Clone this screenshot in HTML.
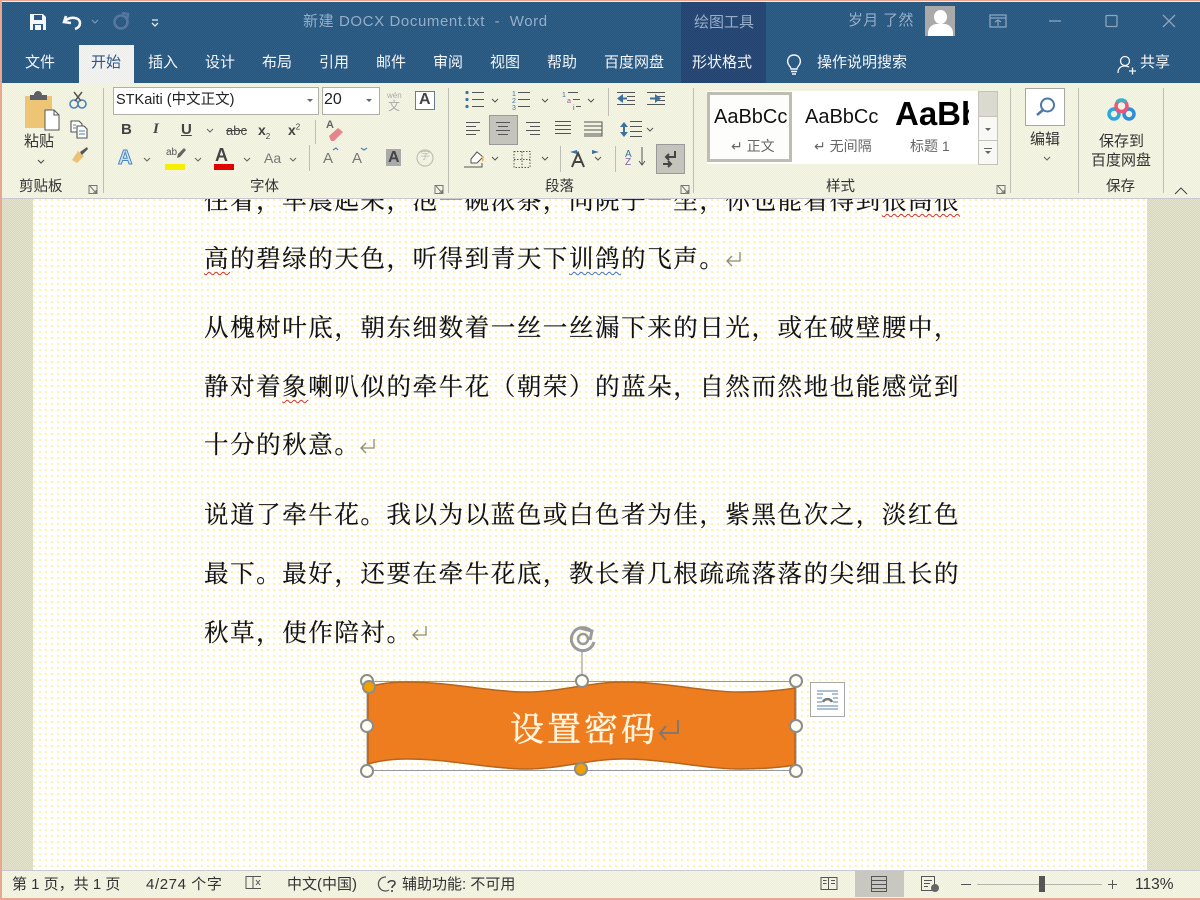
<!DOCTYPE html>
<html lang="zh"><head><meta charset="utf-8"><title>新建 DOCX Document.txt - Word</title>
<style>
html,body{margin:0;padding:0;width:1200px;height:900px;overflow:hidden;background:#e9a78f}
body{position:relative;font-family:"Liberation Sans","Noto Sans CJK SC",sans-serif;color:#333}
.t{position:absolute;white-space:nowrap;line-height:1}
.b{position:absolute}
.tab{font-size:15px;color:#f4f6f8;top:55px}
.lab{font-size:14.5px;color:#333;top:180px}
.doc{position:absolute;left:204px;font-family:"Liberation Serif","Noto Serif CJK SC",serif;font-size:24.5px;letter-spacing:1.57px;color:#111;-webkit-text-stroke:.2px #111;white-space:nowrap;line-height:30px;height:30px}
.st{font-size:15px;color:#333;top:877px}
svg{position:absolute;overflow:visible}
.sep{position:absolute;width:1px;background:#bdbdb4}
.rib{background:repeating-conic-gradient(#f5f5e4 0 25%,#ededec 0 50%) 0 0/2px 2px}
.blue{background:repeating-conic-gradient(#27528c 0 25%,#305f88 0 50%) 0 0/2px 2px}
.dark{background:repeating-conic-gradient(#234470 0 25%,#2a4c6c 0 50%) 0 0/2px 2px}
.side{background:repeating-conic-gradient(#e4e4cc 0 25%,#d4d4d8 0 50%) 0 0/2px 2px}
.page{background:radial-gradient(circle at 1px 1px,#fff0a0 .9px,transparent 1.2px) 0 0/6px 6px #fff}
u.r{text-decoration:underline wavy #d0312d 1px;text-underline-offset:4px;-webkit-text-stroke:.2px #111}
u.bl{text-decoration:underline wavy #4472c4 1px;text-underline-offset:4px}
</style></head><body>

<!-- frame -->
<div class="b rib" style="left:2px;top:1px;width:1198px;height:897px"></div>
<!-- title bar -->
<div class="b blue" style="left:2px;top:2px;width:1198px;height:81px"></div>
<div class="b dark" style="left:681px;top:2px;width:85px;height:81px"></div>

<!-- QAT -->
<svg style="left:0;top:0" width="200" height="45">
<path d="M30 14h13l3 3v13H30z" fill="#f4f6f8"/><rect x="34" y="15" width="8" height="5" fill="#2c5789"/><rect x="33" y="24" width="10" height="6" fill="#2c5789"/><rect x="35" y="25" width="6" height="5" fill="#f4f6f8"/>
<path d="M66 16l-2 6 7 1M65 21c5-5 15-4 15 2 0 3-2 5-5 6" fill="none" stroke="#f4f6f8" stroke-width="2.600"/>
<path d="M92 20l3 3 3-3" fill="none" stroke="#7d98b8" stroke-width="1.200"/>
<circle cx="121" cy="22" r="6.500" fill="none" stroke="#56789f" stroke-width="2.600"/><path d="M122 13l6 1-1 6" fill="none" stroke="#56789f" stroke-width="2.400"/>
<path d="M152 20h6M152 23l3 3 3-3" fill="none" stroke="#e8edf2" stroke-width="1.300"/>
</svg>

<span class="t" style="left:303px;top:14px;font-size:15px;letter-spacing:.6px;color:#97aec8">新建 DOCX Document.txt &nbsp;-&nbsp; Word</span>
<span class="t" style="left:694px;top:15px;font-size:15px;color:#97aec8">绘图工具</span>
<span class="t" style="left:848px;top:13px;font-size:15px;color:#97aec8;letter-spacing:.3px">岁月 了然</span>
<div class="b" style="left:925px;top:6px;width:30px;height:30px;background:#a9a9a9;overflow:hidden">
<div class="b" style="left:9px;top:4px;width:13px;height:14px;background:#fff;border-radius:50%"></div>
<div class="b" style="left:3px;top:18px;width:25px;height:18px;background:#fff;border-radius:9px 9px 0 0"></div></div>
<svg style="left:980px;top:5px" width="210" height="35">
<rect x="10" y="10" width="16" height="12" fill="none" stroke="#8ca4c0" stroke-width="1.300"/><path d="M10 13h16M18 21v-6M15 17l3-2 3 2" fill="none" stroke="#8ca4c0" stroke-width="1.200"/>
<path d="M69 16h12" stroke="#8ca4c0" stroke-width="1.300"/>
<rect x="126" y="10.500" width="11" height="11" rx="1" fill="none" stroke="#8ca4c0" stroke-width="1.300"/>
<path d="M183 10l12 12M195 10l-12 12" stroke="#8ca4c0" stroke-width="1.300"/>
</svg>

<!-- tabs -->
<div class="b rib" style="left:79px;top:45px;width:55px;height:39px"></div>
<span class="t tab" style="left:25px">文件</span>
<span class="t tab" style="left:91px;color:#2c5789">开始</span>
<span class="t tab" style="left:148px">插入</span>
<span class="t tab" style="left:205px">设计</span>
<span class="t tab" style="left:262px">布局</span>
<span class="t tab" style="left:319px">引用</span>
<span class="t tab" style="left:376px">邮件</span>
<span class="t tab" style="left:433px">审阅</span>
<span class="t tab" style="left:490px">视图</span>
<span class="t tab" style="left:547px">帮助</span>
<span class="t tab" style="left:604px">百度网盘</span>
<span class="t tab" style="left:692px">形状格式</span>
<svg style="left:784px;top:52px" width="20" height="24"><path d="M5.500 14c-4-5-1-11 4.500-11s8.500 6 4.500 11c-1 1-1.500 2-1.500 3H7c0-1-.5-2-1.500-3z" fill="none" stroke="#f4f6f8" stroke-width="1.400"/><path d="M7 19.500h6M8 22h4" stroke="#f4f6f8" stroke-width="1.400"/></svg>
<span class="t tab" style="left:817px">操作说明搜索</span>
<svg style="left:1116px;top:54px" width="22" height="22"><circle cx="9" cy="7" r="4.500" fill="none" stroke="#f4f6f8" stroke-width="1.300"/><path d="M2 19c0-5 3-7 7-7 2 0 3 .5 4 1M13 17h7M16.500 13.500v7" fill="none" stroke="#f4f6f8" stroke-width="1.300"/></svg>
<span class="t tab" style="left:1140px">共享</span>

<!-- ribbon separators -->
<div class="sep" style="left:103px;top:88px;height:105px"></div>
<div class="sep" style="left:448px;top:88px;height:105px"></div>
<div class="sep" style="left:693px;top:88px;height:105px"></div>
<div class="sep" style="left:1010px;top:88px;height:105px"></div>
<div class="sep" style="left:1078px;top:88px;height:105px"></div>
<div class="sep" style="left:1163px;top:88px;height:105px"></div>
<div class="sep" style="left:315px;top:120px;height:24px"></div>
<div class="sep" style="left:309px;top:145px;height:26px"></div>
<div class="sep" style="left:608px;top:88px;height:28px"></div>
<div class="sep" style="left:560px;top:146px;height:26px"></div>
<div class="sep" style="left:615px;top:146px;height:26px"></div>

<!-- clipboard -->
<svg style="left:0;top:85px" width="110" height="90">
<rect x="25" y="11" width="27" height="32" fill="#eec574"/>
<path d="M30 15v-5h4a4 4 0 0 1 8 0h5v5z" fill="#5e5e66"/>
<path d="M45 25h9l5 5v15H45z" fill="#fff" stroke="#555" stroke-width="1"/><path d="M54 25v5h5" fill="none" stroke="#555"/>
<path d="M38 75l3 3 3-3" fill="none" stroke="#555" stroke-width="1.200"/>
<circle cx="74" cy="19" r="4" fill="none" stroke="#4d82b8" stroke-width="1.600"/><circle cx="82" cy="19" r="4" fill="none" stroke="#4d82b8" stroke-width="1.600"/>
<path d="M75 16l7-9M81 16l-7-9" stroke="#555" stroke-width="1.500"/>
<path d="M71 36h8l3 3v8H71z" fill="#fdfdfb" stroke="#555" stroke-width="1.100"/><path d="M77 41h7l3 3v9H77z" fill="#fdfdfb" stroke="#555" stroke-width="1.100"/><path d="M73 40h3M73 43h3M79 46h6M79 49h6" stroke="#4d82b8"/>
<path d="M72 75l6-9 6 5-7 7z" fill="#ebc174"/><path d="M80 67l7-5 1 2-6 6z" fill="#555"/>
</svg>
<span class="t" style="left:24px;top:134px;font-size:15px">粘贴</span>

<!-- font boxes -->
<div class="b" style="left:113px;top:87px;width:204px;height:26px;background:#fff;border:1px solid #b0b0a8"></div>
<span class="t" style="left:116px;top:93px;font-size:14.500px;color:#222">STKaiti (中文正文)</span>
<div class="b" style="left:322px;top:87px;width:56px;height:26px;background:#fff;border:1px solid #b0b0a8"></div>
<span class="t" style="left:324px;top:92px;font-size:16px;color:#222">20</span>
<svg style="left:0;top:85px" width="450" height="90">
<path d="M307 14h6l-3 3zM366 14h6l-3 3z" fill="#666"/>
<rect x="415.500" y="6.500" width="19" height="18" fill="#fff" stroke="#6a7a90"/>
</svg>
<span class="t" style="left:387px;top:92px;font-size:8px;color:#aaa">wén</span>
<span class="t" style="left:388px;top:100px;font-size:12px;color:#aaa">文</span>
<span class="t" style="left:419px;top:92px;font-size:16px;font-weight:bold;color:#444">A</span>

<!-- font row 2 -->
<span class="t" style="left:121px;top:122px;font-size:15px;font-weight:bold;color:#444">B</span>
<span class="t" style="left:153px;top:122px;font-size:15px;font-weight:bold;font-style:italic;color:#444;font-family:'Liberation Serif',serif">I</span>
<span class="t" style="left:181px;top:122px;font-size:15px;font-weight:bold;color:#444;text-decoration:underline">U</span>
<span class="t" style="left:226px;top:124px;font-size:13px;color:#444;text-decoration:line-through">abc</span>
<span class="t" style="left:258px;top:123px;font-size:14px;font-weight:bold;color:#444">x<sub style="font-size:8px;font-weight:normal">2</sub></span>
<span class="t" style="left:288px;top:123px;font-size:14px;font-weight:bold;color:#444">x<sup style="font-size:8px;font-weight:normal">2</sup></span>
<span class="t" style="left:326px;top:120px;font-size:11px;font-weight:bold;color:#666">A</span>
<svg style="left:0;top:115px" width="450" height="60">
<path d="M207 14l3 3 3-3M144 43l3 3 3-3M195 43l3 3 3-3M244 43l3 3 3-3M290 43l3 3 3-3" fill="none" stroke="#666" stroke-width="1.100"/>
<path d="M329 21l9-8 5 4-9 9h-3z" fill="#e8848c"/>
<rect x="165" y="49" width="20" height="6" fill="#f7ee00"/><rect x="214" y="49" width="20" height="6" fill="#e00000"/>
<path d="M178 39l6-6 2 2-6 7-3 1z" fill="#666"/>
<rect x="386" y="34" width="15" height="17" fill="#aaa"/>
<circle cx="425" cy="43" r="8" fill="none" stroke="#c0c0b4" stroke-width="1.200"/>
</svg>
<span class="t" style="left:118px;top:148px;font-size:20px;font-weight:bold;color:#cfe2f2;-webkit-text-stroke:1px #4a88c0">A</span>
<span class="t" style="left:166px;top:148px;font-size:10px;color:#555">ab</span>
<span class="t" style="left:215px;top:146px;font-size:18px;font-weight:bold;color:#444">A</span>
<span class="t" style="left:264px;top:151px;font-size:14px;color:#777">Aa</span>
<span class="t" style="left:323px;top:151px;font-size:15px;color:#777">A</span>
<span class="t" style="left:352px;top:151px;font-size:15px;color:#777">A</span>
<span class="t" style="left:388px;top:150px;font-size:16px;font-weight:bold;color:#444">A</span>
<span class="t" style="left:420px;top:152px;font-size:10px;color:#bbb">字</span>
<svg style="left:0;top:145px" width="450" height="20"><path d="M333 5l3-2 2 2M361 3l3 2 3-2" fill="none" stroke="#4d82b8" stroke-width="1.200"/></svg>

<!-- paragraph -->
<div class="b" style="left:489px;top:115px;width:27px;height:28px;background:#c4c4bc;border:1px solid #999"></div>
<div class="b" style="left:656px;top:144px;width:27px;height:28px;background:#c4c4bc;border:1px solid #999"></div>
<svg style="left:440px;top:85px" width="260" height="90">
<g stroke="#555" stroke-width="1" fill="none">
<path d="M32 7.500h12M32 14.500h12M32 21.500h12M78 7.500h12M78 14.500h12M78 21.500h12M128 7.500h10M133 14.500h7M136 21.500h5"/>
<path d="M52 14l3 3 3-3M102 14l3 3 3-3M148 14l3 3 3-3M207 43l3 3 3-3M52 72l3 3 3-3M102 72l3 3 3-3M155 72l3 3 3-3" />
<path d="M26 37.500h14M26 41.500h10M26 45.500h14M26 49.500h10"/>
<path d="M56 37.500h14M58 41.500h10M56 45.500h14M58 49.500h10"/>
<path d="M86 37.500h14M90 41.500h10M86 45.500h14M90 49.500h10"/>
<path d="M115 36.500h16M115 40.500h16M115 44.500h16M115 48.500h16"/>
<path d="M144 37h18v14h-18M144 41h18M144 45h18M144 49h18"/>
<path d="M190 36.500h12M190 41.500h12M190 46.500h12M190 51.500h12"/>
<path d="M177 7.500h18M187 11.500h8M187 15.500h8M177 19.500h18M207 7.500h18M216 11.500h9M216 15.500h9M207 19.500h18"/>
<path d="M74 66.500h16v16H74zM82 66.500v16M74 74.500h16" stroke-dasharray="1.500 1.500"/>
<path d="M24 82h18v-4" />
</g>
<g fill="#3f6f9f">
<circle cx="27" cy="7.500" r="1.600"/><circle cx="27" cy="14.500" r="1.600"/><circle cx="27" cy="21.500" r="1.600"/>
<path d="M177 13.500l6-4.500v9zM215 9l6 4.500-6 4.500zM183 12.500h4v2h-4zM210 12.500h5v2h-5zM184 37l-4 5h8zM184 52l-4-5h8z"/>
<rect x="183" y="41" width="2" height="7"/>
<path d="M130 67l7-2v4zM159 67l-7-2v4z"/>
</g>
<path d="M31 74l6-7 6 5-6 6h-6z" fill="#fff" stroke="#555"/><path d="M42 70l2 5-2 2z" fill="#e8b860"/>
<path d="M132 82l6-14 6 14M134 77h8" fill="none" stroke="#444" stroke-width="2"/>
<path d="M202 62v18M199 76l3 4 3-4" fill="none" stroke="#555"/>
<path d="M235 66v6h-9M229 69l-3 3 3 3" fill="none" stroke="#444" stroke-width="2"/>
<path d="M223 79h8M228 76l3 3-3 3" fill="none" stroke="#444" stroke-width="2"/>
</svg>
<span class="t" style="left:512px;top:91px;font-size:7px;color:#3f6f9f;line-height:7px;white-space:pre-line">1
2
3</span>
<span class="t" style="left:562px;top:92px;font-size:7px;color:#3f6f9f;line-height:7px">1</span>
<span class="t" style="left:567px;top:98px;font-size:7px;color:#8a5a9a;line-height:7px">a</span>
<span class="t" style="left:573px;top:105px;font-size:7px;color:#555;line-height:7px">i</span>
<span class="t" style="left:625px;top:150px;font-size:10px;color:#3f6f9f">A</span>
<span class="t" style="left:625px;top:158px;font-size:10px;color:#8a5a9a">Z</span>

<!-- styles -->
<div class="b" style="left:707px;top:91px;width:271px;height:73px;background:#fff"></div>
<div class="b" style="left:707px;top:92px;width:79px;height:64px;background:#fdfdfb;border:3px solid #bdbdb4"></div>
<span class="t" style="left:714px;top:107px;font-size:20px;color:#111">AaBbCc</span>
<span class="t" style="left:805px;top:107px;font-size:20px;color:#111">AaBbCc</span>
<div class="b" style="left:895px;top:93px;width:74px;height:44px;overflow:hidden"><span class="t" style="left:0;top:4px;font-size:33px;font-weight:bold;color:#000">AaBbC</span></div>
<span class="t" style="left:731px;top:139px;font-size:14px;color:#666">↵ 正文</span>
<span class="t" style="left:814px;top:139px;font-size:14px;color:#666">↵ 无间隔</span>
<span class="t" style="left:910px;top:139px;font-size:14px;color:#666">标题 1</span>
<div class="b" style="left:978px;top:91px;width:18px;height:24px;background:#dadad0;border:1px solid #c4c4bc"></div>
<div class="b" style="left:978px;top:116px;width:18px;height:23px;background:#f8f8f4;border:1px solid #c4c4bc"></div>
<div class="b" style="left:978px;top:140px;width:18px;height:23px;background:#f8f8f4;border:1px solid #c4c4bc"></div>
<svg style="left:978px;top:91px" width="20" height="72"><path d="M7 37h6l-3 3zM7 60h6l-3 3z" fill="#666"/><path d="M6 57.500h8" stroke="#666"/></svg>

<!-- edit -->
<div class="b" style="left:1025px;top:88px;width:38px;height:36px;background:#fff;border:1px solid #a8a8a0"></div>
<svg style="left:1025px;top:88px" width="40" height="38"><circle cx="22.500" cy="17" r="6.500" fill="none" stroke="#4a78a8" stroke-width="2"/><path d="M18 22l-6 5" stroke="#4a78a8" stroke-width="2.500"/></svg>
<span class="t" style="left:1030px;top:132px;font-size:15px">编辑</span>
<svg style="left:1040px;top:153px" width="14" height="10"><path d="M4 4l3 3 3-3" fill="none" stroke="#666" stroke-width="1.100"/></svg>

<!-- baidu -->
<svg style="left:1105px;top:97px" width="32" height="28">
<circle cx="9" cy="17" r="5" fill="none" stroke="#29a8e0" stroke-width="3.500"/>
<circle cx="24" cy="17" r="5" fill="none" stroke="#2c8ed8" stroke-width="3.500"/>
<circle cx="16.500" cy="9" r="5.500" fill="none" stroke="#e9577a" stroke-width="3.500"/>
<path d="M12 5a6 6 0 0 1 9 0" fill="none" stroke="#36b6c8" stroke-width="3.500"/>
</svg>
<span class="t" style="left:1099px;top:134px;font-size:15px">保存到</span>
<span class="t" style="left:1091px;top:153px;font-size:15px">百度网盘</span>

<!-- labels -->
<span class="t lab" style="left:19px">剪贴板</span>
<span class="t lab" style="left:250px">字体</span>
<span class="t lab" style="left:545px">段落</span>
<span class="t lab" style="left:826px">样式</span>
<span class="t lab" style="left:1106px">保存</span>
<svg style="left:0;top:180px" width="1200" height="18">
<g fill="none" stroke="#777" stroke-width="1"><path d="M89 5.500h8v8h-8zM90 6l6 7M96 10v3h-3"/>
<path d="M435 5.500h8v8h-8zM436 6l6 7M442 10v3h-3"/><path d="M681 5.500h8v8h-8zM682 6l6 7M688 10v3h-3"/><path d="M997 5.500h8v8h-8zM998 6l6 7M1004 10v3h-3"/>
<path d="M1175 14l6-6 6 6" stroke="#444"/></g></svg>

<!-- document -->
<div class="b side" style="left:2px;top:199px;width:1198px;height:671px"></div>
<div class="b page" style="left:33px;top:199px;width:1114px;height:671px"></div>
<div class="b" style="left:2px;top:198px;width:1198px;height:1px;background:#c8c8d0"></div>
<div class="b" style="left:0;top:199px;width:1200px;height:671px;overflow:hidden">
<div class="doc" style="top:-12px">住着，早晨起来，泡一碗浓茶，向院子一坐，你也能看得到<u class="r">很高很</u></div>
<div class="doc" style="top:46px"><u class="r">高</u>的碧绿的天色，听得到青天下<u class="bl">训鸽</u>的飞声。</div>
<div class="doc" style="top:115px">从槐树叶底，朝东细数着一丝一丝漏下来的日光，或在破壁腰中，</div>
<div class="doc" style="top:174px">静对着<u class="r">象</u>喇叭似的牵牛花（朝荣）的蓝朵，自然而然地也能感觉到</div>
<div class="doc" style="top:232px">十分的秋意。</div>
<div class="doc" style="top:302px">说道了牵牛花。我以为以蓝色或白色者为佳，紫黑色次之，淡红色</div>
<div class="doc" style="top:361px">最下。最好，还要在牵牛花底，教长着几根疏疏落落的尖细且长的</div>
<div class="doc" style="top:420px">秋草，使作陪衬。</div>
</div>
<svg style="left:0;top:0" width="1200" height="900"><g fill="none" stroke="#8c8c72" stroke-width="1.300">
<path d="M740 252v9h-13M732 256l-5 5 5 5"/>
<path d="M374 439v9h-13M366 443l-5 5 5 5"/>
<path d="M426 626v9h-13M418 630l-5 5 5 5"/>
</g></svg>

<!-- shape -->
<svg style="left:0;top:0" width="1200" height="900">
<path d="M582 650v26" stroke="#888" stroke-width="1"/>
<rect x="367" y="681.500" width="429" height="89" fill="none" stroke="#999" stroke-width="1"/>
<path d="M368 687C382 683 395 682 407 682C450 682 490 692 527 692C560 692 590 682 623 682C665 682 705 692 740 692C760 692 778 691 795 688L795 765C778 768 760 769 740 769C705 769 665 759 623 759C590 759 560 769 527 769C490 769 450 759 407 759C395 759 382 760 368 764Z" fill="#ed7d1f" stroke="#b5651d" stroke-width="1.500"/>
<g fill="#fffff6" stroke="#8c8c8c" stroke-width="2">
<circle cx="367" cy="681" r="6"/><circle cx="582" cy="681" r="6"/><circle cx="796" cy="681" r="6"/>
<circle cx="367" cy="726" r="6"/><circle cx="796" cy="726" r="6"/>
<circle cx="367" cy="771" r="6"/><circle cx="796" cy="771" r="6"/>
</g>
<circle cx="369" cy="687" r="6" fill="#f0a000" stroke="#8c8c8c" stroke-width="2"/>
<circle cx="581" cy="769" r="6" fill="#f0a000" stroke="#8c8c8c" stroke-width="2"/>
<path d="M594 642a11.500 11.500 0 1 1-3-11M580 628l12 3-2 9" fill="none" stroke="#9a9a9a" stroke-width="3"/><circle cx="583" cy="639" r="5" fill="none" stroke="#9a9a9a" stroke-width="2.500"/>
<rect x="810.500" y="682.500" width="34" height="34" fill="#fff" stroke="#a8a8a8"/>
<path d="M817 691h21M817 694h6M832 694h6M817 698h5M833 698h5M817 702h5M833 702h5M817 706h21M817 709h21" stroke="#5b7fa6"/><path d="M823 702a5 5 0 0 1 9 0" fill="none" stroke="#777" stroke-width="2.500"/>
</svg>
<span class="t" style="left:510px;top:714px;font-size:34px;letter-spacing:3px;color:#fff6e0;-webkit-text-stroke:.5px #fff6e0;font-family:'Liberation Serif','Noto Serif CJK SC',serif">设置密码</span>
<svg style="left:657px;top:718px" width="24" height="24"><path d="M21 2v13H3M9 8l-6 7 6 7" fill="none" stroke="#85776a" stroke-width="2"/></svg>

<!-- status -->
<div class="b rib" style="left:2px;top:870px;width:1198px;height:28px;border-top:1px solid #c8c8d0;box-sizing:border-box"></div>
<span class="t st" style="left:12px">第 1 页，共 1 页</span>
<span class="t st" style="left:146px;letter-spacing:.6px">4/274 个字</span>
<svg style="left:244px;top:875px" width="20" height="16"><path d="M2 1.500h7v12H2zM9 1.500h8M9 13.500h8" fill="none" stroke="#555"/><path d="M12 5l4 5M16 5l-4 5" stroke="#555"/></svg>
<span class="t st" style="left:287px">中文(中国)</span>
<svg style="left:380px;top:875px" width="22" height="18"><path d="M6 2a7 7 0 1 0 3 13" fill="none" stroke="#555" stroke-width="1.300"/><path d="M8 8c1-3 7-3 7 0 0 3-3 2-3 5M12 15v2" fill="none" stroke="#444" stroke-width="1.600"/></svg>
<span class="t st" style="left:402px">辅助功能: 不可用</span>
<div class="b" style="left:855px;top:871px;width:49px;height:26px;background:#c8c8c0"></div>
<svg style="left:810px;top:870px" width="380" height="27">
<g fill="none" stroke="#555" stroke-width="1">
<path d="M11 7.500h7.500v12H11zM18.500 7.500H27v12h-8.500M13 10.500h3.500M13 13.500h3.500M21 10.500h4M21 13.500h4"/>
<path d="M61.500 6.500h15v15h-15zM61.500 10.500h15M61.500 14.500h15M61.500 18.500h15"/>
<path d="M111.500 6.500h13v14h-13zM114 10.500h8M114 13.500h6M114 16.500h4"/>
<path d="M151 14.500h10M298 14.500h9M302.500 10v9"/>
<path d="M167 14.500h125" stroke="#b4b4ac"/></g>
<circle cx="125" cy="18" r="4" fill="#666"/>
<rect x="229" y="6" width="6" height="16" fill="#555"/>
</svg>
<span class="t st" style="left:1135px;font-size:15.500px">113%</span>

</body></html>
